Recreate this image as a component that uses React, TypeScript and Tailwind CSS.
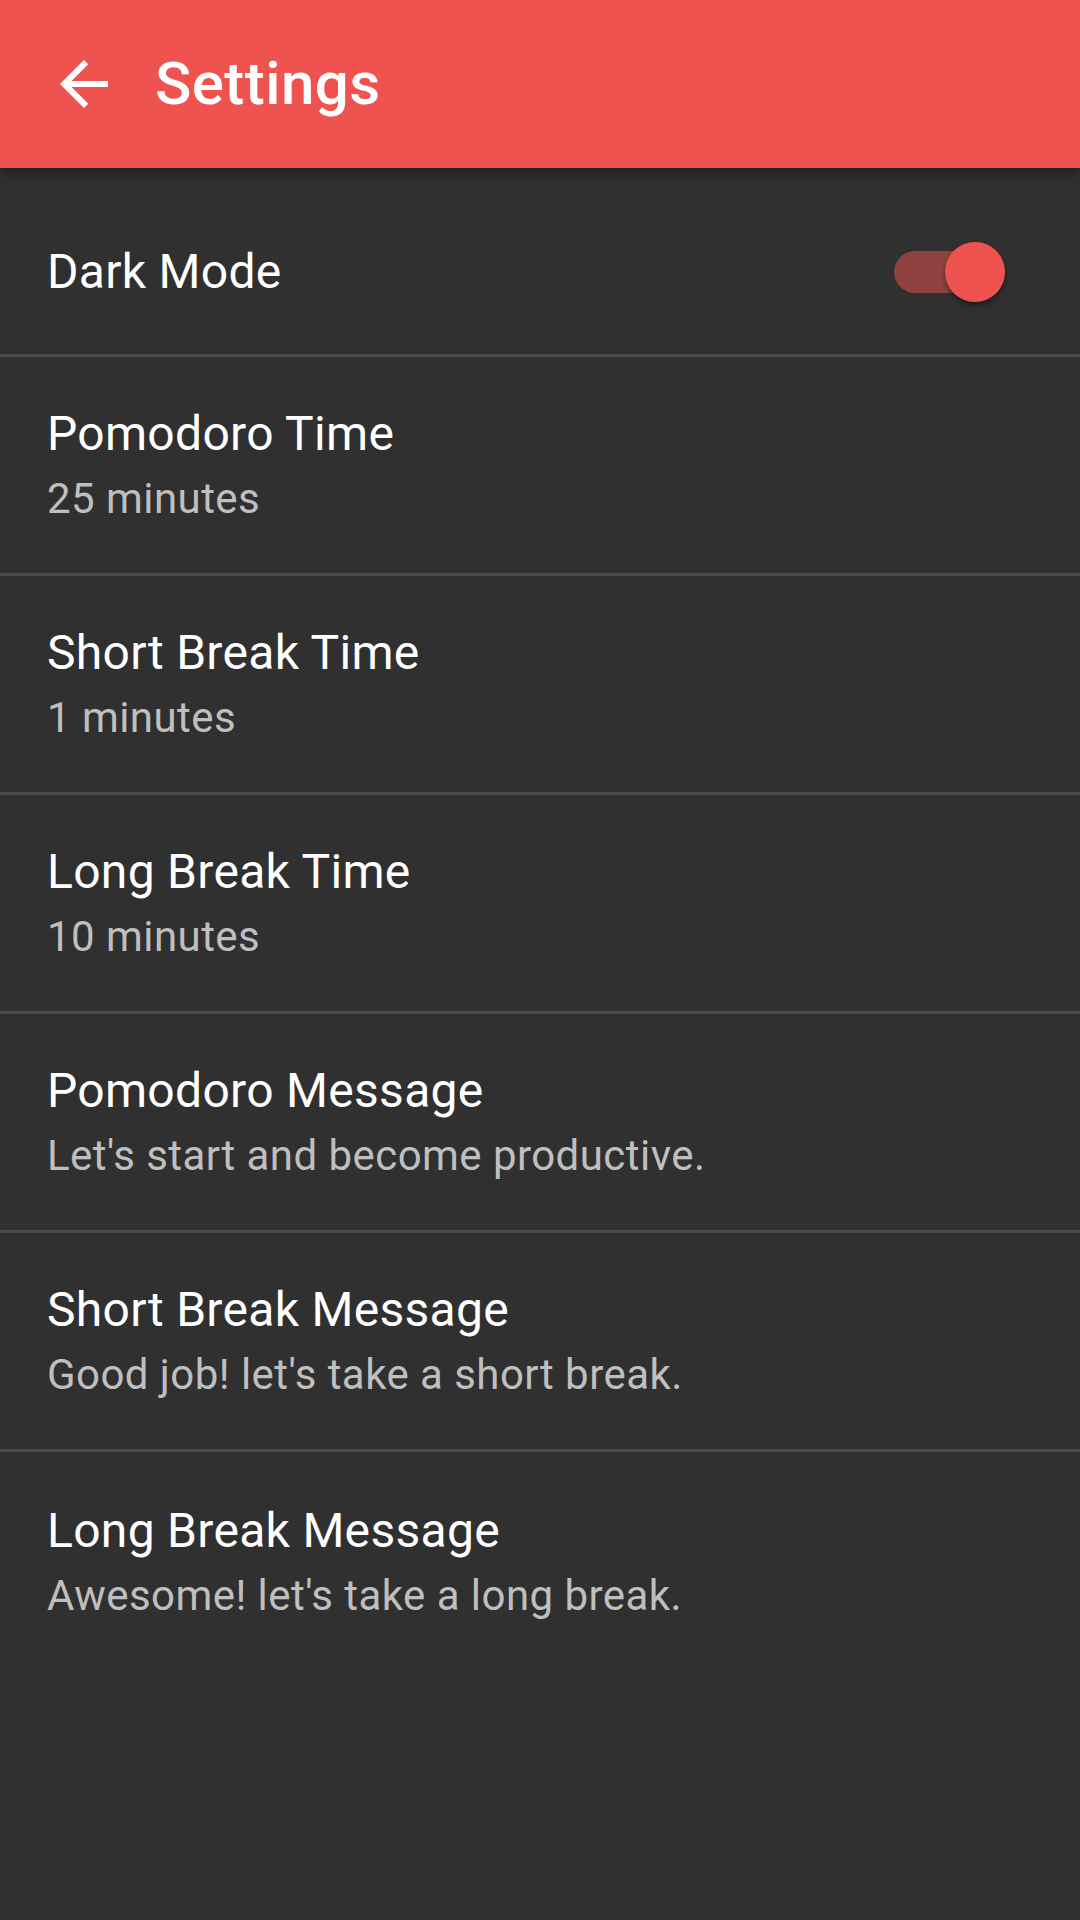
import React, { useState } from 'react';

const items = [
  { title: 'Pomodoro Time', value: '25 minutes' },
  { title: 'Short Break Time', value: '1 minutes' },
  { title: 'Long Break Time', value: '10 minutes' },
  { title: 'Pomodoro Message', value: "Let's start and become productive." },
  { title: 'Short Break Message', value: "Good job! let's take a short break." },
  { title: 'Long Break Message', value: "Awesome! let's take a long break." },
];

export default function App() {
  const [dark, setDark] = useState(true);

  return (
    <div className="min-h-screen w-[1080px] h-[1920px] bg-[#303030] flex flex-col font-['Roboto',sans-serif] overflow-hidden">
      {/* app bar */}
      <header className="relative z-10 h-[168px] shrink-0 bg-[#ef5350] flex items-center pl-[48px] shadow-[0_4px_10px_rgba(0,0,0,0.35)]">
        <button className="w-[72px] h-[72px] flex items-center justify-center">
          <svg viewBox="0 0 24 24" className="w-[72px] h-[72px]" fill="#ffffff">
            <path d="M20 11H7.83l5.59-5.59L12 4l-8 8 8 8 1.41-1.41L7.83 13H20v-2z" />
          </svg>
        </button>
        <h1 className="ml-[35px] text-[60px] leading-[72px] font-medium tracking-[0.45px] text-white">Settings</h1>
      </header>

      {/* dark mode */}
      <div className="flex items-center justify-between pl-[47px] pr-[75px] pt-[74px] pb-[52px] border-b-[3px] border-[#4a4a4a]">
        <span className="text-[48px] leading-[56px] tracking-[0.3px] text-white">Dark Mode</span>
        <button onClick={() => setDark(!dark)} className="relative w-[111px] h-[60px]">
          <div className={`absolute left-0 top-[9px] w-[102px] h-[42px] rounded-full ${dark ? 'bg-[#8f4240]' : 'bg-[#6b6b6b]'}`}></div>
          <div
            className={`absolute top-0 w-[60px] h-[60px] rounded-full shadow-[0_3px_5px_rgba(0,0,0,0.45)] ${dark ? 'left-[51px] bg-[#ef5350]' : 'left-[-9px] bg-[#bdbdbd]'}`}
          ></div>
        </button>
      </div>

      {items.map((item, i) => (
        <div
          key={item.title}
          className={`h-[219px] shrink-0 flex flex-col justify-center pl-[47px] ${i < items.length - 1 ? 'border-b-[3px] border-[#4a4a4a]' : ''}`}
        >
          <div className="text-[48px] leading-[56px] tracking-[0.3px] text-white">{item.title}</div>
          <div className="mt-[12px] text-[42px] leading-[50px] tracking-[0.45px] text-[#bfbfbf]">{item.value}</div>
        </div>
      ))}
    </div>
  );
}
